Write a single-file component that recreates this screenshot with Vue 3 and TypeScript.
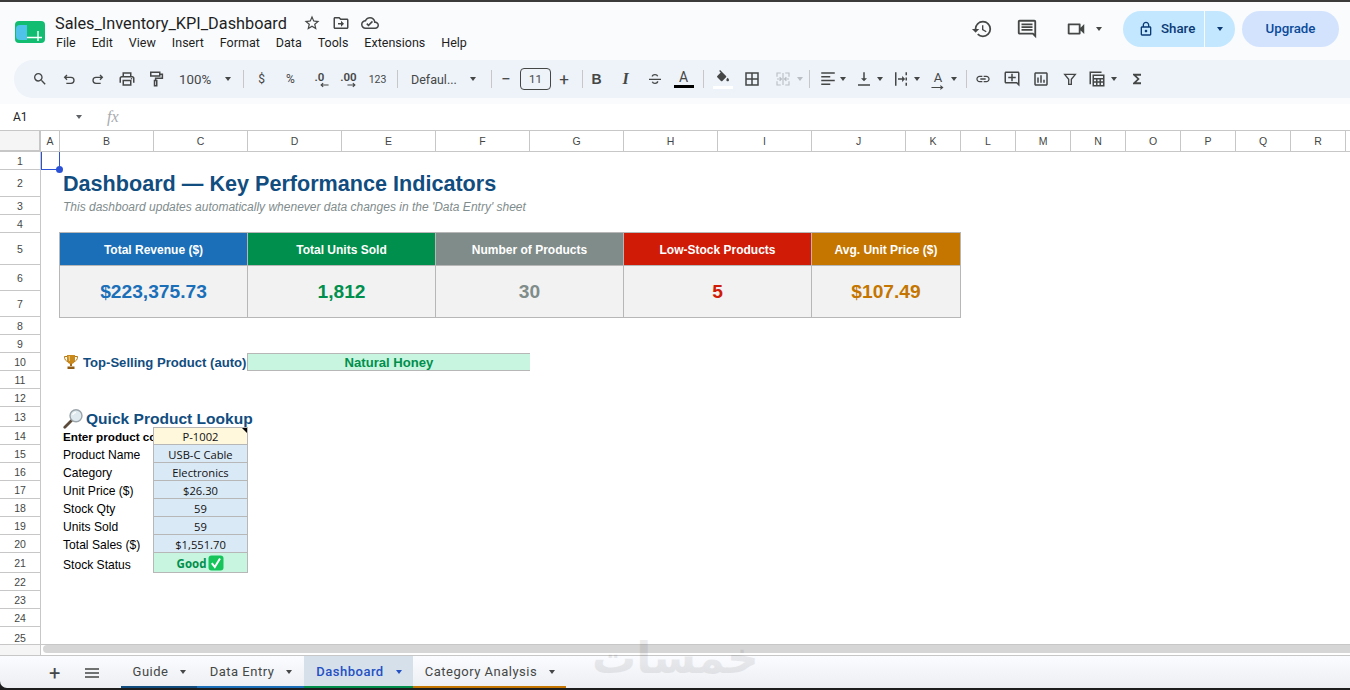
<script setup lang="ts">
const cols = ['A','B','C','D','E','F','G','H','I','J','K','L','M','N','O','P','Q','R',''];
const rows = Array.from({ length: 25 }, (_, i) => i + 1);
const kpis = [
  { title: 'Total Revenue ($)', value: '$223,375.73', cls: 'blue', col: 3 },
  { title: 'Total Units Sold', value: '1,812', cls: 'green', col: 5 },
  { title: 'Number of Products', value: '30', cls: 'gray', col: 7 },
  { title: 'Low-Stock Products', value: '5', cls: 'red', col: 9 },
  { title: 'Avg. Unit Price ($)', value: '$107.49', cls: 'orange', col: 11 },
];
const lookup = [
  ['Product Name', 'USB-C Cable'],
  ['Category', 'Electronics'],
  ['Unit Price ($)', '$26.30'],
  ['Stock Qty', '59'],
  ['Units Sold', '59'],
  ['Total Sales ($)', '$1,551.70'],
];
const menus = ['File', 'Edit', 'View', 'Insert', 'Format', 'Data', 'Tools', 'Extensions', 'Help'];
const tabs = [
  { name: 'Guide', cls: 't-guide' },
  { name: 'Data Entry', cls: 't-entry' },
  { name: 'Dashboard', cls: 't-dash' },
  { name: 'Category Analysis', cls: 't-cat' },
];
</script>

<template>
  <div class="app">
    <div class="topline"></div>
    <header class="header">
      <svg class="logo" viewBox="0 0 30 22" width="30" height="22">
        <rect x="0" y="0" width="30" height="22" rx="4" fill="#12bd72" />
        <path d="M1 8q0-4 4-4h7v15H5q-4 0-4-4z" fill="#4fc3ea" />
        <path d="M12 16.5h15M23 10v10" stroke="#fff" stroke-width="1.4" fill="none" />
      </svg>
      <div class="titles">
        <div class="title-row">
          <span class="doc-title">Sales_Inventory_KPI_Dashboard</span>
          <svg class="ic star" viewBox="0 0 24 24"><path d="M22 9.24l-7.19-.62L12 2 9.19 8.63 2 9.24l5.46 4.73L5.82 21 12 17.27 18.18 21l-1.63-7.03L22 9.24zM12 15.4l-3.76 2.27 1-4.28-3.32-2.88 4.38-.38L12 6.1l1.71 4.04 4.38.38-3.32 2.88 1 4.28L12 15.4z" /></svg>
          <svg class="ic folder" viewBox="0 0 24 24"><path d="M20 6h-8l-2-2H4c-1.1 0-2 .9-2 2v12c0 1.1.9 2 2 2h16c1.1 0 2-.9 2-2V8c0-1.1-.9-2-2-2zm0 12H4V6h5.17l2 2H20v10zm-8-1v-3H8v-2h4V9l4 4z" /></svg>
          <svg class="ic cloud" viewBox="0 0 24 24"><path d="M19.35 10.04C18.67 6.59 15.64 4 12 4 9.11 4 6.6 5.64 5.35 8.04 2.34 8.36 0 10.91 0 14c0 3.31 2.69 6 6 6h13c2.76 0 5-2.24 5-5 0-2.64-2.05-4.78-4.65-4.96zM19 18H6c-2.21 0-4-1.79-4-4s1.79-4 4-4h.71C7.37 7.69 9.48 6 12 6c3.04 0 5.5 2.46 5.5 5.5v.5H19c1.66 0 3 1.34 3 3s-1.34 3-3 3zm-9-1.5l-3-3 1.41-1.41L10 13.67l4.59-4.58L16 10.5z" /></svg>
        </div>
        <nav class="menus"><span v-for="m in menus" :key="m">{{ m }}</span></nav>
      </div>
      <div class="actions">
        <svg class="ic act hist" viewBox="0 0 24 24"><path d="M13 3a9 9 0 0 0-9 9H1l3.89 3.89.07.14L9 12H6c0-3.87 3.13-7 7-7s7 3.13 7 7-3.13 7-7 7c-1.93 0-3.68-.79-4.94-2.06l-1.42 1.42A8.954 8.954 0 0 0 13 21a9 9 0 0 0 0-18zm-1 5v5l4.28 2.54.72-1.21-3.5-2.08V8H12z" /></svg>
        <svg class="ic act comm" viewBox="0 0 24 24"><path d="M20 2H4c-1.1 0-2 .9-2 2v12c0 1.1.9 2 2 2h14l4 4V4c0-1.1-.9-2-2-2zm0 15.17L18.83 16H4V4h16v13.17zM6 12h12v2H6zm0-3h12v2H6zm0-3h12v2H6z" /></svg>
        <svg class="ic act cam" viewBox="0 0 24 24"><path d="M15 8v8H5V8h10m1-2H4c-.55 0-1 .45-1 1v10c0 .55.45 1 1 1h12c.55 0 1-.45 1-1v-3.5l4 4v-11l-4 4V7c0-.55-.45-1-1-1z" /></svg>
        <span class="caret cam-caret"></span>
        <div class="share">
          <span class="share-main">
            <svg class="lock" viewBox="0 0 24 24"><path d="M18 8h-1V6c0-2.76-2.24-5-5-5S7 3.24 7 6v2H6c-1.1 0-2 .9-2 2v10c0 1.1.9 2 2 2h12c1.1 0 2-.9 2-2V10c0-1.1-.9-2-2-2zM9 6c0-1.66 1.34-3 3-3s3 1.34 3 3v2H9V6zm9 14H6V10h12v10zm-6-3c1.1 0 2-.9 2-2s-.9-2-2-2-2 .9-2 2 .9 2 2 2z" /></svg>
            <span class="btn-label">Share</span>
          </span>
          <span class="share-drop"><span class="caret dark"></span></span>
        </div>
        <span class="upgrade"><span class="btn-label">Upgrade</span></span>
      </div>
    </header>

    <div class="toolbar">
      <span class="b"><svg class="ti" viewBox="0 0 24 24"><path d="M15.5 14h-.79l-.28-.27A6.471 6.471 0 0 0 16 9.5 6.5 6.5 0 1 0 9.5 16c1.61 0 3.09-.59 4.23-1.57l.27.28v.79l5 4.99L20.49 19l-4.99-5zm-6 0C7.01 14 5 11.99 5 9.5S7.01 5 9.5 5 14 7.01 14 9.5 11.99 14 9.5 14z" /></svg></span>
      <span class="b"><svg class="ti" viewBox="0 0 24 24"><path class="st" d="M9 6 5.5 9.5 9 13M5.5 9.5H15a4.5 4.5 0 0 1 0 9H8" /></svg></span>
      <span class="b"><svg class="ti" viewBox="0 0 24 24"><path class="st" d="M15 6l3.5 3.5L15 13M18.500 9.500H9a4.500 4.500 0 0 0 0 9h7" /></svg></span>
      <span class="b"><svg class="ti big" viewBox="0 0 24 24"><path d="M19 8h-1V3H6v5H5c-1.660 0-3 1.340-3 3v6h4v4h12v-4h4v-6c0-1.660-1.340-3-3-3zM8 5h8v3H8V5zm8 14H8v-4h8v4zm2-2v-4H6v4H4v-6c0-.550.450-1 1-1h14c.550 0 1 .450 1 1v6h-2z" /><circle cx="18" cy="11.500" r="1" /></svg></span>
      <span class="b"><svg class="ti big" viewBox="0 0 24 24"><path class="st" d="M5 3h12v5H5zM17 5.500h3.500v5.500H11.500v3M10 14h3v7h-3z" /></svg></span>
      <span class="zoomv">100%</span><span class="caret c-zoom"></span>
      <span class="sep s-a"></span>
      <span class="b txt">$</span>
      <span class="b txt">%</span>
      <span class="b dec"><em>.0</em><svg class="dec-arrow da-l" viewBox="0 0 10 6"><path class="st2" d="M9.500 3H1.500M3.500 .8 1.200 3l2.300 2.200" /></svg></span>
      <span class="b dec"><em>.00</em><svg class="dec-arrow da-r" viewBox="0 0 10 6"><path class="st2" d="M.5 3h8M6.500 .8 8.800 3 6.500 5.200" /></svg></span>
      <span class="b n123">123</span>
      <span class="sep s-b"></span>
      <span class="font">Defaul...</span><span class="caret c-font"></span>
      <span class="sep s-c"></span>
      <span class="pm minus">−</span>
      <span class="sizebox">11</span>
      <span class="pm plus">+</span>
      <span class="sep s-d"></span>
      <span class="b bold">B</span>
      <span class="b ital">I</span>
      <span class="b"><svg class="ti" viewBox="0 0 24 24"><path class="st" d="M3 12.500h18M16 8c-.500-1.500-2-2.500-4-2.500S8 6.500 8 8.300M16 15.500c0 2-1.800 3-4 3s-3.500-1-4-2.500" /></svg></span>
      <span class="b color-a">A<i></i></span>
      <span class="sep s-e"></span>
      <span class="b fill"><svg class="ti" viewBox="0 0 24 24"><path d="M16.560 8.940 7.620 0 6.210 1.410l2.380 2.380-5.150 5.150c-.590.590-.590 1.540 0 2.120l5.500 5.500c.290.290.680.440 1.060.440s.770-.150 1.060-.440l5.500-5.500c.590-.580.590-1.530 0-2.120zM19 11.500s-2 2.170-2 3.500c0 1.100.900 2 2 2s2-.900 2-2c0-1.330-2-3.500-2-3.500z" /></svg><i></i></span>
      <span class="b"><svg class="ti big" viewBox="0 0 24 24"><path d="M3 3v18h18V3H3zm8 16H5v-6h6v6zm0-8H5V5h6v6zm8 8h-6v-6h6v6zm0-8h-6V5h6v6z" /></svg></span>
      <span class="b merge"><svg class="ti big" viewBox="0 0 24 24"><path class="st" d="M9 4H4v5M15 4h5v5M9 20H4v-5M15 20h5v-5M10 12H4M7.500 9.500 10 12l-2.500 2.500M14 12h6M16.500 9.500 14 12l2.500 2.500M12 4v16" /></svg></span>
      <span class="caret c-merge"></span>
      <span class="sep s-f"></span>
      <span class="b w-al"><svg class="ti big" viewBox="0 0 24 24"><path d="M3 3h18v2H3zM3 8h12v2H3zM3 13h18v2H3zM3 18h12v2H3z" /></svg></span><span class="caret c-tb"></span>
      <span class="b w-va"><svg class="ti big" viewBox="0 0 24 24"><path d="M8 11h3V3h2v8h3l-4 4-4-4zM4 19v2h16v-2H4z" /></svg></span><span class="caret c-tb"></span>
      <span class="b w-wr"><svg class="ti big" viewBox="0 0 24 24"><path d="M4 3h2v18H4zM18 3h2v4h-2zM18 10h2v4h-2zM18 17h2v4h-2zM8 11h5.500V8l4 4-4 4v-3H8z" /></svg></span><span class="caret c-tb"></span>
      <span class="b w-ro rot">A<svg class="rot-arrow" viewBox="0 0 14 5"><path class="st2" d="M.5 2.500h12M10 .5l2.500 2-2.500 2" /></svg></span><span class="caret c-tb"></span>
      <span class="sep s-g"></span>
      <span class="b"><svg class="ti" viewBox="0 0 24 24"><path d="M3.900 12c0-1.710 1.390-3.100 3.100-3.100h4V7H7c-2.760 0-5 2.240-5 5s2.240 5 5 5h4v-1.900H7c-1.710 0-3.100-1.390-3.100-3.100zM8 13h8v-2H8v2zm9-6h-4v1.900h4c1.710 0 3.100 1.390 3.100 3.100s-1.390 3.100-3.100 3.100h-4V17h4c2.760 0 5-2.240 5-5s-2.240-5-5-5z" /></svg></span>
      <span class="b"><svg class="ti big" viewBox="0 0 24 24"><path d="M22 4c0-1.100-.900-2-2-2H4c-1.100 0-2 .900-2 2v12c0 1.100.900 2 2 2h14l4 4V4zm-2 13.170L18.830 16H4V4h16v13.170zM13 5h-2v4H7v2h4v4h2v-4h4V9h-4z" /></svg></span>
      <span class="b"><svg class="ti big" viewBox="0 0 24 24"><path d="M19 3H5c-1.100 0-2 .900-2 2v14c0 1.100.900 2 2 2h14c1.100 0 2-.900 2-2V5c0-1.100-.900-2-2-2zm0 16H5V5h14v14zM7 10h2v7H7zm4-3h2v10h-2zm4 6h2v4h-2z" /></svg></span>
      <span class="b"><svg class="ti" viewBox="0 0 24 24"><path class="st" d="M4 5h16l-6 7.500V20h-4v-7.500z" /></svg></span>
      <span class="b w-ta"><svg class="ti big" viewBox="0 0 24 24"><path class="st" d="M3 19V3h15M7 7h14v14H7zM7 11.500h14M11.700 11.500V21M16.300 11.500V21M7 16h14" /></svg></span><span class="caret c-ta"></span>
      <span class="b sigma"><svg class="ti" viewBox="0 0 24 24"><path d="M18 4H6v2l6.500 6L6 18v2h12v-3h-7l5-5-5-5h7z" /></svg></span>
    </div>

    <div class="fbar">
      <span class="namebox">A1</span><span class="caret c-name"></span>
      <span class="fx">fx</span>
    </div>

    <main class="sheet">
      <div class="corner"></div>
      <div v-for="c in cols" :key="c" class="colh">{{ c }}</div>
      <div v-for="r in rows" :key="r" class="rowh" :style="{ gridRow: r + 1 }">{{ r }}</div>

      <div class="sel"><i></i></div>

      <div class="cell main-title">Dashboard — Key Performance Indicators</div>
      <div class="cell sub-title">This dashboard updates automatically whenever data changes in the 'Data Entry' sheet</div>

      <template v-for="k in kpis" :key="k.title">
        <div class="kpi-head" :class="k.cls" :style="{ gridColumn: k.col + ' / span 2' }">{{ k.title }}</div>
        <div class="kpi-val" :class="k.cls" :style="{ gridColumn: k.col + ' / span 2' }">{{ k.value }}</div>
      </template>

      <div class="cell top-label">
        <svg class="trophy" viewBox="0 0 16 16" width="16" height="16">
          <path d="M4 1h8v5c0 2.500-1.800 4-4 4S4 8.500 4 6z" fill="#c98a1b" />
          <path d="M4 2.500H1.500C1.500 6 3 7 5 7.500M12 2.500h2.500C14.500 6 13 7 11 7.500" fill="none" stroke="#b3771a" stroke-width="1" />
          <path d="M7 9.500h2V12H7z" fill="#a96d17" />
          <path d="M4.500 12.500h7V15h-7z" fill="#8f5b14" />
          <path d="M5.500 2h1.500v5H6z" fill="#edc56a" />
        </svg>
        <span>Top-Selling Product (auto)</span>
      </div>
      <div class="top-value">Natural Honey</div>

      <div class="cell look-title">
        <svg class="glass" viewBox="0 0 20 20" width="20" height="20">
          <path d="M9 11 1.800 18.200" stroke="#5c4a3a" stroke-width="2.800" stroke-linecap="round" />
          <circle cx="13" cy="6.800" r="6" fill="#dfeaf0" stroke="#9aa5ab" stroke-width="1.400" />
          <path d="M9.600 6c.500-1.700 1.700-2.500 3.400-2.700" stroke="#fff" stroke-width="1.200" fill="none" />
        </svg>
        <span>Quick Product Lookup</span>
      </div>

      <div class="cell enter-label"><span>Enter product code</span></div>
      <div class="code-val">P-1002<i></i></div>

      <template v-for="(l, i) in lookup" :key="l[0]">
        <div class="cell lk-label" :style="{ gridRow: i + 16 }">{{ l[0] }}</div>
        <div class="lk-val" :style="{ gridRow: i + 16 }">{{ l[1] }}</div>
      </template>

      <div class="cell lk-label status-label">Stock Status</div>
      <div class="lk-val status-val">
        <span>Good</span>
        <svg viewBox="0 0 16 16" width="16" height="16">
          <rect x="0.500" y="0.500" width="15" height="15" rx="3" fill="#16c55a" />
          <path d="M3.800 8.200 6.800 12 12 3.500" stroke="#fff" stroke-width="2" fill="none" />
        </svg>
      </div>
    </main>

    <div class="scroll"><div class="scroll-left"></div><div class="scroll-thumb"></div></div>

    <footer class="tabs-wrap">
      <div class="tabs">
        <span class="add">+</span>
        <svg class="all" viewBox="0 0 14 10" width="14" height="10"><path d="M0 1h14M0 5h14M0 9h14" stroke="#444746" stroke-width="1.300" /></svg>
        <div v-for="t in tabs" :key="t.name" class="tab" :class="t.cls">
          <span>{{ t.name }}</span><span class="caret"></span>
        </div>
      </div>
    </footer>
    <span class="mark">خمسات</span>
  </div>
</template>

<style>
html, body { margin: 0; padding: 0; background: #f9fbfd; }
</style>

<style scoped>
.app {
  width: 1350px; height: 690px; overflow: hidden; position: relative;
  display: flex; flex-direction: column;
  background: #f9fbfd; color: #444746;
  font-family: Roboto, "Liberation Sans", sans-serif;
}
.topline { height: 2px; background: #3b3b3b; flex: none; }
.header { height: 58px; flex: none; display: flex; position: relative; }
.logo { margin: 19px 0 0 15px; flex: none; }
.titles { margin-left: 10px; }
.title-row { display: flex; align-items: center; height: 24px; margin-top: 9px; }
.doc-title { font-size: 16.300px; color: #1f1f1f; width: 248px; white-space: nowrap; }
.ic { width: 18px; height: 18px; fill: #444746; flex: none; }
.star { margin-left: 0; }
.folder { margin-left: 11px; }
.cloud { margin-left: 11px; }
.menus { display: flex; gap: 16px; font-size: 12.500px; color: #1f1f1f; margin-top: 0; margin-left: 1px; }

.actions { position: absolute; right: 11px; top: 9px; height: 36px; display: flex; align-items: center; }
.act { width: 22px; height: 22px; }
.hist { margin-right: 23px; }
.comm { margin-right: 27px; }
.cam-caret { margin: 0 21px 0 9px; }
.share { display: flex; height: 36px; width: 112px; background: #c2e7ff; border-radius: 18px; color: #0b3a75; font-size: 13.300px; overflow: hidden; }
.btn-label { font-weight: 500; position: relative; top: -1px; }
.share-main { width: 66px; display: flex; align-items: center; padding-left: 15px; gap: 7px; border-right: 1px solid #f9fbfd; box-sizing: content-box; }
.lock { width: 16px; height: 16px; fill: #0b3a75; }
.share-drop { flex: 1; display: flex; align-items: center; justify-content: center; }
.upgrade { margin-left: 7px; width: 97px; height: 36px; border-radius: 18px; background: #d3e3fd; color: #0b4b9a; font-size: 13.300px; display: flex; align-items: center; justify-content: center; }

.caret { display: inline-block; width: 0; height: 0; border-left: 3.5px solid transparent; border-right: 3.5px solid transparent; border-top: 4px solid #444746; flex: none; }
.caret.dark { border-top-color: #0b3a75; }

.toolbar { height: 38px; margin: 0 0 0 14px; padding-left: 11px; flex: none; background: #eef2f9; border-radius: 19px 0 0 19px; display: flex; align-items: center; font-size: 12px; color: #444746; }
.b { width: 29px; height: 24px; display: flex; align-items: center; justify-content: center; flex: none; position: relative; }
.ti { width: 16px; height: 16px; fill: #444746; }
.ti.big { width: 18px; height: 18px; }
.st { fill: none; stroke: #444746; stroke-width: 2; }
.st2 { fill: none; stroke: #444746; stroke-width: 1.200; }
.zoomv { margin-left: 9px; width: 38px; font-size: 13.300px; }
.c-zoom { margin-left: 8px; }
.sep { width: 1px; height: 18px; background: #c7c7c7; flex: none; }
.s-a { margin: 0 3px 0 12px; }
.txt { font-size: 12px; }
.dec { font-size: 11.500px; font-weight: 600; }
.dec em { font-style: normal; position: relative; top: -2px; }
.dec-arrow { position: absolute; width: 9px; height: 6px; top: 15px; }
.da-l { left: 15px; }
.da-r { left: 13px; }
.n123 { font-size: 10.500px; }
.s-b { margin: 0 13px 0 5px; }
.font { width: 55px; font-size: 12.500px; }
.c-font { margin-left: 4px; }
.s-c { margin: 0 8px 0 15px; }
.pm { font-size: 17px; width: 12px; text-align: center; flex: none; }
.sizebox { width: 29px; height: 20px; margin: 0 7px 0 8px; border: 1px solid #444746; border-radius: 4px; text-align: center; line-height: 20px; font-size: 11.500px; flex: none; }
.s-d { margin: 0 -1px 0 12px; }
.bold { font-family: "Liberation Sans", sans-serif; font-weight: 700; font-size: 14px; }
.ital { font-family: "Liberation Serif", serif; font-style: italic; font-weight: 700; font-size: 16px; }
.color-a { font-size: 14px; flex-direction: column; line-height: 14px; }
.color-a i { display: block; width: 20px; height: 3px; background: #000; margin-top: 1px; }
.s-e { margin: 0 4px 0 5px; }
.fill { flex-direction: column; }
.fill i { display: block; width: 20px; height: 3px; background: #fff; margin-top: 0; }
.merge { margin-left: 2px; }
.merge .st { stroke: #b9bec5; stroke-width: 1.500; }
.c-merge { border-top-color: #b9bec5; margin-left: 0; margin-right: 6px; }
.s-f { margin-right: 6px; }
.w-al { width: 24px; }
.c-tb { margin: 0 5px 0 0; }
.w-va, .w-wr { width: 26px; margin-left: 0; }
.w-ro { width: 26px; }
.rot { font-size: 13px; padding-bottom: 4px; box-sizing: border-box; }
.rot-arrow { position: absolute; width: 13px; height: 5px; left: 6px; bottom: 1px; }
.s-g { margin: 0 1px 0 4px; }
.w-ta { width: 26px; }
.c-ta { margin: 0 7px 0 1px; }
.sigma { width: 26px; }

.fbar { height: 26px; margin-top: 6px; background: #fff; display: flex; align-items: center; flex: none; font-size: 12px; color: #1f1f1f; }
.namebox { margin-left: 13px; width: 63px; }
.c-name { margin-right: 0; border-top-color: #5f6368; }
.fx { margin-left: 25px; font-family: "Liberation Serif", serif; font-style: italic; font-size: 16px; color: #a8abaf; }

.sheet {
  flex: none; height: 514px; overflow: hidden; background: #fff; position: relative;
  display: grid;
  grid-template-columns: 41px 19px repeat(9, 94px) repeat(9, 55px);
  grid-template-rows: 22px 18px 27px 18px 18px 32px 26px 26px 18px 18px 18px 18px 18px 20px 18px 18px 18px 18px 18px 18px 18px 20px 18px 18px 18px 22px;
  font-family: "Liberation Sans", Arial, sans-serif;
  font-size: 12.100px; color: #000;
}
.corner { grid-row: 1; grid-column: 1; background: #f5f5f5; border-right: 2px solid #c7c7c7; border-bottom: 2px solid #c7c7c7; border-top: 1px solid #c7c7c7; box-sizing: border-box; }
.colh { grid-row: 1; border-top: 1px solid #c7c7c7; border-bottom: 1px solid #c7c7c7; border-right: 1px solid #c7c7c7; box-sizing: border-box; text-align: center; font-size: 10.500px; line-height: 20px; color: #444746; background: #fff; }
.rowh { grid-column: 1; border-right: 1px solid #c7c7c7; border-bottom: 1px solid #c7c7c7; box-sizing: border-box; font-size: 10.500px; color: #444746; display: flex; align-items: center; justify-content: center; background: #fff; font-family: "Liberation Sans", sans-serif; }
.sel { grid-row: 2; grid-column: 2; border: 1px solid #2b52d6; border-top: 0; margin-left: 0; box-sizing: border-box; position: relative; }
.sel i { position: absolute; right: -4px; bottom: -4px; width: 7px; height: 7px; border-radius: 50%; background: #2b52d6; }

.cell { white-space: nowrap; padding-left: 3px; display: flex; align-items: center; }
.main-title { grid-row: 3; grid-column: 3 / span 6; font-size: 21.600px; font-weight: 700; color: #114d7f; padding-top: 1px; }
.sub-title { grid-row: 4; grid-column: 3 / span 8; font-size: 12px; font-style: italic; color: #7f8c8d; padding-top: 1px; }

.kpi-head { grid-row: 6; display: flex; align-items: center; justify-content: center; color: #fff; font-weight: 700; font-size: 12px; border: 1px solid #b7b7b7; margin: -1px 0 -1px -1px; padding-top: 1px; }
.kpi-val { grid-row: 7 / span 2; display: flex; align-items: center; justify-content: center; font-weight: 700; font-size: 19.200px; background: #f2f2f2; border: 1px solid #b7b7b7; margin: 0 0 -1px -1px; }
.kpi-head.blue { background: #1a6fb8; }
.kpi-head.green { background: #008f4c; }
.kpi-head.gray { background: #7f8c8a; }
.kpi-head.red { background: #d01c07; }
.kpi-head.orange { background: #c47600; }
.kpi-val.blue { color: #1a6fb8; }
.kpi-val.green { color: #008f4c; }
.kpi-val.gray { color: #7f8c8a; }
.kpi-val.red { color: #d01c07; }
.kpi-val.orange { color: #c47600; }

.top-label { grid-row: 11; grid-column: 3 / span 2; font-size: 13.100px; font-weight: 700; color: #114d7f; gap: 4px; }
.trophy { flex: none; }
.top-value { grid-row: 11; grid-column: 5 / span 3; background: #c8f5e0; border: 1px solid #b7b7b7; border-width: 1px 0 1px 1px; margin-left: -1px; display: flex; align-items: center; justify-content: center; color: #008f4c; font-weight: 700; font-size: 13.100px; }
.look-title { grid-row: 14; grid-column: 3 / span 3; font-size: 15.550px; font-weight: 700; color: #114d7f; gap: 3px; padding-top: 3px; box-sizing: border-box; height: 20px; }
.glass { flex: none; }
.enter-label { grid-row: 15; grid-column: 3; font-weight: 700; font-size: 11.700px; overflow: hidden; padding-top: 1px; }
.code-val, .lk-val { grid-column: 4; display: flex; align-items: center; justify-content: center; font-family: "Open Sans", sans-serif; font-size: 11.200px; color: #111; border: 1px solid #b7b7b7; border-top: 0; margin-left: -1px; position: relative; background: #d9e9f6; padding-top: 1px; }
.code-val { grid-row: 15; background: #fff8dc; border-top: 1px solid #b7b7b7; }
.code-val i { position: absolute; top: 0; right: 0; border-top: 5px solid #000; border-left: 5px solid transparent; }
.lk-label { grid-column: 3; padding-top: 2px; box-sizing: border-box; }
.status-label { grid-row: 22; padding-top: 3px; }
.status-val { grid-row: 22; background: #c8f5e0; color: #008f4c; font-weight: 700; font-size: 11.500px; gap: 2px; padding-top: 1px; }

.scroll { height: 10px; flex: none; background: #fff; border-top: 1px solid #c7c7c7; border-bottom: 1px solid #c7c7c7; display: flex; }
.scroll-left { width: 41px; height: 100%; box-sizing: border-box; background: #f5f5f5; border-right: 1px solid #c7c7c7; flex: none; }
.scroll-thumb { height: 8px; margin-left: 2px; flex: 1; background: #d6d6d6; border-radius: 4px 0 0 4px; }

.tabs-wrap { flex: 1; background: #1d1d1d; }
.tabs { height: 32px; display: flex; align-items: stretch; position: relative; background: linear-gradient(#fbfcff, #eceef2); border-radius: 0 0 0 7px; }
.add { position: absolute; left: 49px; top: 6px; font-size: 20px; line-height: 22px; color: #444746; }
.all { position: absolute; left: 85px; top: 12px; }
.tab { display: flex; align-items: center; justify-content: center; gap: 12px; height: 32px; padding: 1px 0 0 1px; border-bottom: 2px solid; font-size: 13px; letter-spacing: .5px; color: #444746; box-sizing: border-box; }
.t-guide { margin-left: 121px; width: 76px; border-color: #114d7f; }
.t-entry { width: 107px; border-color: #1a6fb8; }
.t-dash { width: 109px; border-color: #008f4c; background: #d5e0ea; color: #2450c4; font-weight: 500; }
.t-dash .caret { border-top-color: #2450c4; }
.t-cat { width: 153px; border-color: #c47600; }
.mark { position: absolute; left: 592px; top: 630px; font-family: "DejaVu Sans", sans-serif; font-weight: 700; font-size: 44px; line-height: 56px; color: #000; opacity: .07; pointer-events: none; }
</style>
